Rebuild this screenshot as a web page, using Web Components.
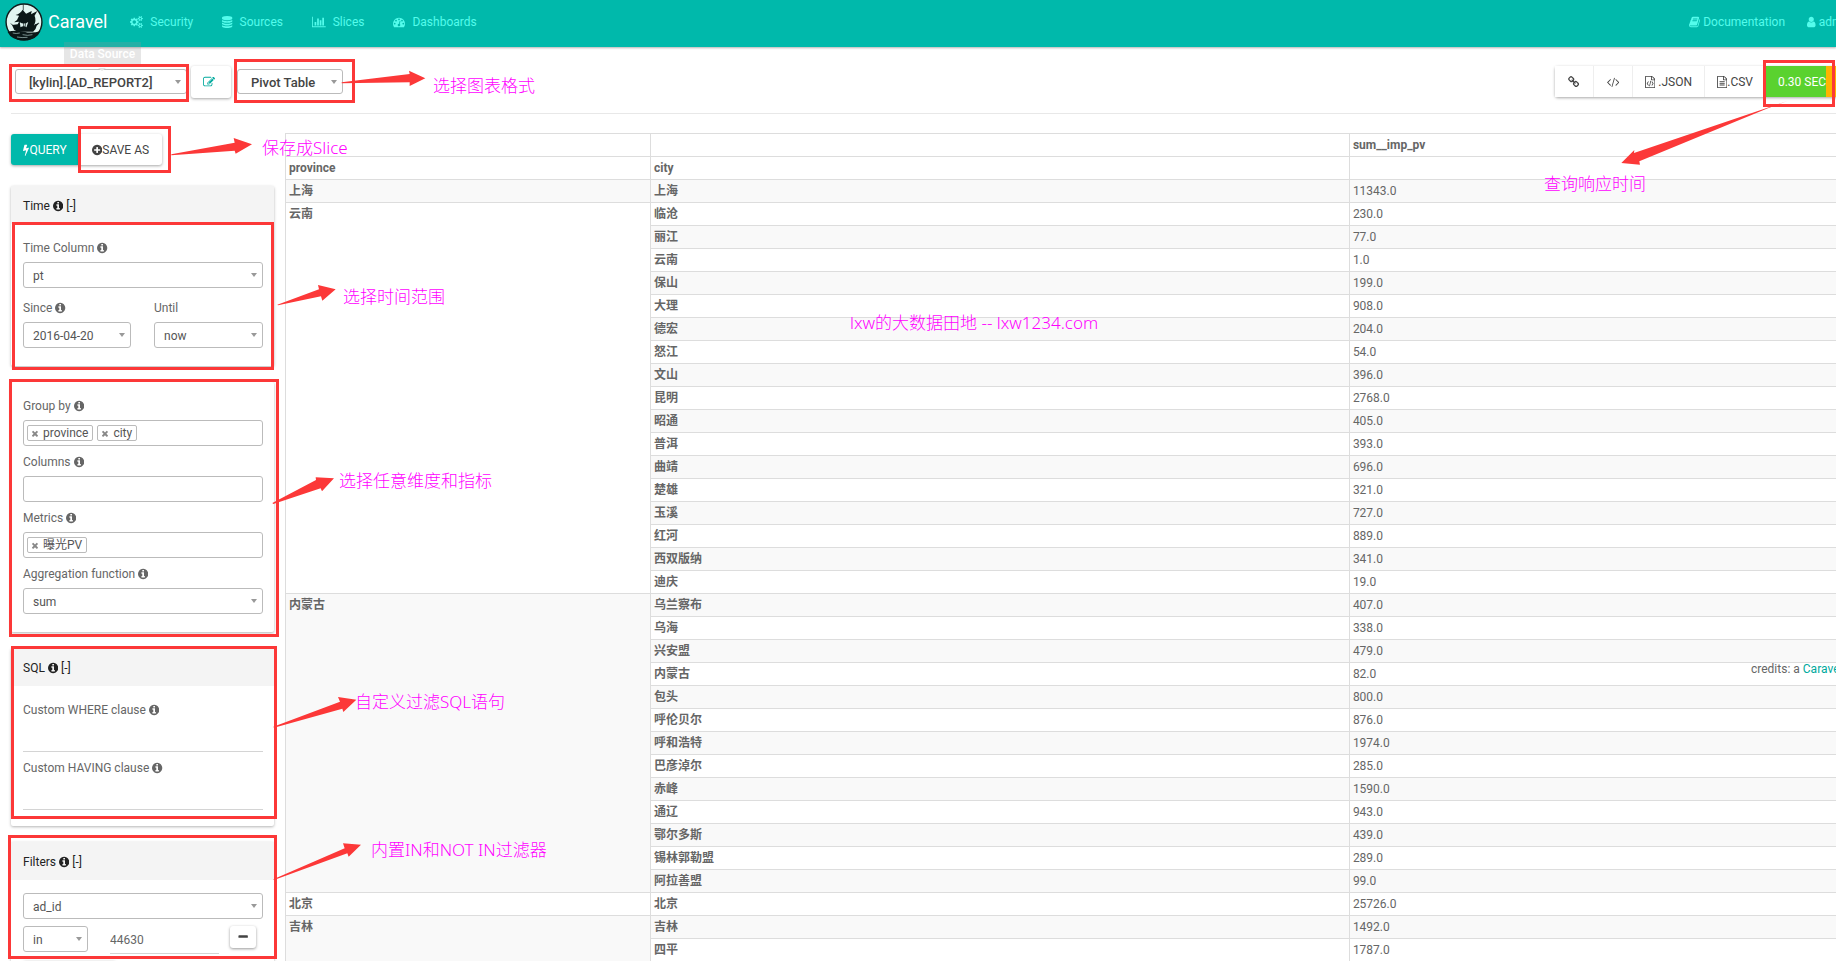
<!DOCTYPE html>
<html lang="en">
<head>
<meta charset="utf-8">
<title>Caravel</title>
<style>
  body {
    margin: 0;
    height: 100vh;
    overflow: hidden;
    font: 12px/18px Roboto, "Noto Sans CJK SC", sans-serif;
    color: #666;
    background: #fff;
  }
</style>
</head>
<body>
<caravel-app></caravel-app>

<script>
const define = (name, render) => customElements.define(name, class extends HTMLElement {
  connectedCallback() {
    if (this.shadowRoot) return;
    this.attachShadow({ mode: "open" }).innerHTML = render(this);
  }
});
const attr = (el, name) => el.getAttribute(name) || "";

/* ---------- icons: [x origin, width, drawing] on a 1792-unit tall grid ---------- */
const DISC = "M1664 896q0 209-103 385.5t-279.5 279.5-385.5 103-385.5-103-279.5-279.5-103-385.5 103-385.5 279.5-279.5 385.5-103 385.5 103 279.5 279.5 103 385.5z";
const SHEET = "M1596 380q28 28 48 76t20 88v1152q0 40-28 68t-68 28h-1344q-40 0-68-28t-28-68v-1600q0-40 28-68t68-28h896q40 0 88 20t76 48zm-444-244v376h376q-10-29-22-41l-313-313q-12-12-41-22zm384 1528v-1024h-416q-40 0-68-28t-28-68v-416h-768v1536h1280z";
const ICONS = {
  info: [128, 1536, "M1152 1376v-160q0-14-9-23t-23-9h-96v-512q0-14-9-23t-23-9h-320q-14 0-23 9t-9 23v160q0 14 9 23t23 9h96v320h-96q-14 0-23 9t-9 23v160q0 14 9 23t23 9h448q14 0 23-9t9-23zm-128-896v-160q0-14-9-23t-23-9h-192q-14 0-23 9t-9 23v160q0 14 9 23t23 9h192q14 0 23-9t9-23z" + DISC],
  plus: [128, 1536, "M1344 960v-128q0-26-19-45t-45-19h-256v-256q0-26-19-45t-45-19h-128q-26 0-45 19t-19 45v256h-256q-26 0-45 19t-19 45v128q0 26 19 45t45 19h256v256q0 26 19 45t45 19h128q26 0 45-19t19-45v-256h256q26 0 45-19t19-45z" + DISC],
  bolt: [440, 900, "M1333 566q18 20 7 44l-540 1157q-13 25-42 25-4 0-14-2-17-5-25.5-19t-4.5-30l197-808-406 101q-4 1-12 1-18 0-31-11-18-15-13-39l201-825q4-14 16-23t28-9h328q19 0 32 12.5t13 29.5q0 8-5 18l-171 463 396-98q8-2 12-2 19 0 34 15z"],
  database: [128, 1536, "M896 768q237 0 443-43t325-127v170q0 69-103 128t-280 93.5-385 34.5-385-34.5-280-93.5-103-128v-170q119 84 325 127t443 43zm0 768q237 0 443-43t325-127v170q0 69-103 128t-280 93.5-385 34.5-385-34.5-280-93.5-103-128v-170q119 84 325 127t443 43zm0-384q237 0 443-43t325-127v170q0 69-103 128t-280 93.5-385 34.5-385-34.5-280-93.5-103-128v-170q119 84 325 127t443 43zm0-1152q208 0 385 34.5t280 93.5 103 128v128q0 69-103 128t-280 93.5-385 34.5-385-34.5-280-93.5-103-128v-128q0-69 103-128t280-93.5 385-34.5z"],
  chart: [0, 2048, "M640 896v512h-256v-512h256zm384-512v1024h-256v-1024h256zm1024 1152v128h-2048v-1536h128v1408h1920zm-640-896v768h-256v-768h256zm384-384v1152h-256v-1152h256z"],
  gauge: [0, 1792, "M384 1152q0-53-37.5-90.5t-90.5-37.5-90.5 37.5-37.5 90.5 37.5 90.5 90.5 37.5 90.5-37.5 37.5-90.5zm192-448q0-53-37.5-90.5t-90.5-37.5-90.5 37.5-37.5 90.5 37.5 90.5 90.5 37.5 90.5-37.5 37.5-90.5zm428 481l101-382q6-26-7.5-48.5t-38.5-29.5-48 6.5-30 39.5l-101 382q-60 5-107 43.5t-63 98.5q-20 77 20 146t117 89 146-20 89-117q16-60-6-117t-72-91zm660-33q0-53-37.5-90.5t-90.5-37.5-90.5 37.5-37.5 90.5 37.5 90.5 90.5 37.5 90.5-37.5 37.5-90.5zm-640-640q0-53-37.5-90.5t-90.5-37.5-90.5 37.5-37.5 90.5 37.5 90.5 90.5 37.5 90.5-37.5 37.5-90.5zm448 192q0-53-37.5-90.5t-90.5-37.5-90.5 37.5-37.5 90.5 37.5 90.5 90.5 37.5 90.5-37.5 37.5-90.5zm320 448q0 261-141 483-19 29-54 29h-1402q-35 0-54-29-141-221-141-483 0-182 71-348t191-286 286-191 348-71 348 71 286 191 191 286 71 348z"],
  user: [256, 1280, "M1536 1399q0 109-62.5 187t-150.5 78h-854q-88 0-150.5-78t-62.5-187q0-85 8.5-160.5t31.5-152 58.5-131 94-89 134.5-34.5q131 128 313 128t313-128q76 0 134.5 34.5t94 89 58.5 131 31.5 152 8.5 160.5zm-256-887q0 159-112.5 271.5t-271.5 112.5-271.5-112.5-112.5-271.5 112.5-271.5 271.5-112.5 271.5 112.5 112.5 271.5z"],
  book: [60, 1670, "M1703 478q40 57 18 129l-275 906q-19 64-76.5 107.5t-122.5 43.5h-923q-77 0-148.5-53.5t-99.5-131.5q-24-67-2-127 0-4 3-27t4-37q1-8-3-21.5t-3-19.5q2-11 8-21t16.5-23.5 16.5-23.5q23-38 45-91.5t30-91.5q3-10 .5-30t-.5-28q3-11 17-28t17-23q21-36 42-92t25-90q1-9-2.5-32t.5-28q4-13 22-30.5t22-22.5q19-26 42.5-84.5t27.5-96.5q1-8-3-25.5t-2-26.5q2-8 9-18t18-23 17-21q8-12 16.5-30.5t15-35 16-36 19.5-32 26.5-23.5 36-11.5 47.5 5.5l-1 3q38-9 51-9h761q74 0 114 56t18 130l-274 906q-36 119-71.5 153.5t-128.5 34.5h-869q-27 0-38 15-11 16-1 43 24 70 144 70h923q29 0 56-15.5t35-41.5l300-987q7-22 5-57 38 15 59 43zm-1064 2q-4 13 2 22.5t20 9.5h608q13 0 25.5-9.5t16.5-22.5l21-64q4-13-2-22.5t-20-9.5h-608q-13 0-25.5 9.5t-16.5 22.5zm-83 256q-4 13 2 22.5t20 9.5h608q13 0 25.5-9.5t16.5-22.5l21-64q4-13-2-22.5t-20-9.5h-608q-13 0-25.5 9.5t-16.5 22.5z"],
  edit: [0, 1792, "M888 1184l116-116-152-152-116 116v56h96v96h56zm440-720q-16-16-33 1l-350 350q-17 17-1 33t33-1l350-350q17-17 1-33zm80 594v190q0 119-84.5 203.5t-203.5 84.5h-832q-119 0-203.5-84.5t-84.5-203.5v-832q0-119 84.5-203.5t203.5-84.5h832q63 0 117 25 15 7 18 23 3 17-9 29l-49 49q-14 14-32 8-23-6-45-6h-832q-66 0-113 47t-47 113v832q0 66 47 113t113 47h832q66 0 113-47t47-113v-126q0-13 9-22l64-64q15-15 35-7t20 29zm-96-738l288 288-672 672h-288v-288zm444 132l-92 92-288-288 92-92q28-28 68-28t68 28l152 152q28 28 28 68t-28 68z"],
  code: [100, 1848, "M681 1399l-50 50q-10 10-23 10t-23-10l-466-466q-10-10-10-23t10-23l466-466q10-10 23-10t23 10l50 50q10 10 10 23t-10 23l-393 393 393 393q10 10 10 23t-10 23zm591-1067l-373 1291q-4 13-15.5 19.5t-23.5 2.5l-62-17q-13-4-19.5-15.5t-2.5-24.5l373-1291q4-13 15.5-19.5t23.5-2.5l62 17q13 4 19.5 15.5t2.5 24.5zm657 651l-466 466q-10 10-23 10t-23-10l-50-50q-10-10-10-23t10-23l393-393-393-393q-10-10-10-23t10-23l50-50q10-10 23-10t23 10l466 466q10 10 10 23t-10 23z"],
  link: [60, 1664, "M1520 1216q0-40-28-68l-208-208q-28-28-68-28-42 0-72 32 3 3 19 18.5t21.5 21.5 15 19 13 25.5 3.5 27.5q0 40-28 68t-68 28q-15 0-27.5-3.5t-25.5-13-19-15-21.5-21.5-18.5-19q-33 31-33 73 0 40 28 68l206 207q27 27 68 27 40 0 68-26l147-146q28-28 28-67zm-703-705q0-40-28-68l-206-207q-28-28-68-28-39 0-68 27l-147 146q-28 28-28 67 0 40 28 68l208 208q27 27 68 27 42 0 72-31-3-3-19-18.5t-21.5-21.5-15-19-13-25.5-3.5-27.5q0-40 28-68t68-28q15 0 27.5 3.5t25.5 13 19 15 21.5 21.5 18.5 19q33-31 33-73zm895 705q0 120-85 203l-147 146q-83 83-203 83-121 0-204-85l-206-207q-83-83-83-203 0-123 88-209l-88-88q-86 88-208 88-120 0-204-84l-208-208q-84-84-84-204t85-203l147-146q83-83 203-83 121 0 204 85l206 207q83 83 83 203 0 123-88 209l88 88q86-88 208-88 120 0 204 84l208 208q84 84 84 204z"],
  filetext: [128, 1536, SHEET + "M512 800q0-14 9-23t23-9h704q14 0 23 9t9 23v64q0 14-9 23t-23 9h-704q-14 0-23-9t-9-23v-64zm736 224q14 0 23 9t9 23v64q0 14-9 23t-23 9h-704q-14 0-23-9t-9-23v-64q0-14 9-23t23-9h704zm0 256q14 0 23 9t9 23v64q0 14-9 23t-23 9h-704q-14 0-23-9t-9-23v-64q0-14 9-23t23-9h704z"],
  filecode: [128, 1536, SHEET + "M608 800l90 70-180 260 180 260-90 70-230-330zM1184 800l-90 70 180 260-180 260 90 70 230-330zM930 720l110 20-180 800-110-20z"],
  minus: [128, 1536, "M1600 736v192q0 40-28 68t-68 28h-1216q-40 0-68-28t-28-68v-192q0-40 28-68t68-28h1216q40 0 68 28t28 68z"],
  times: [300, 1190, "M1490 1322q0 40-28 68l-136 136q-28 28-68 28t-68-28l-294-294-294 294q-28 28-68 28t-68-28l-136-136q-28-28-28-68t28-68l294-294-294-294q-28-28-28-68t28-68l136-136q28-28 68-28t68 28l294 294 294-294q28-28 68-28t68 28l136 136q28 28 28 68t-28 68l-294 294 294 294q28 28 28 68z"],
  cogs: [0, 1920, "M896 896q0-106-75-181t-181-75-181 75-75 181 75 181 181 75 181-75 75-181zm768 512q0-52-38-90t-90-38-90 38-38 90q0 53 37.5 90.5t90.5 37.5 90.5-37.5 37.5-90.5zm0-1024q0-52-38-90t-90-38-90 38-38 90q0 53 37.5 90.5t90.5 37.5 90.5-37.5 37.5-90.5zm-384 421v185q0 10-7 19.5t-16 10.5l-155 24q-11 35-32 76 34 48 90 115 7 11 7 20 0 12-7 19-23 30-82.5 89.5t-78.5 59.5q-11 0-21-7l-115-90q-37 19-77 31-11 108-23 155-7 24-30 24h-186q-11 0-20-7.5t-10-17.5l-23-153q-34-10-75-31l-118 89q-7 7-20 7-11 0-21-8-144-133-144-160 0-9 7-19 10-14 41-53t47-61q-23-44-35-82l-152-24q-10-1-17-9.5t-7-19.5v-185q0-10 7-19.5t16-10.5l155-24q11-35 32-76-34-48-90-115-7-11-7-20 0-12 7-20 22-30 82-89t79-59q11 0 21 7l115 90q34-18 77-32 11-108 23-154 7-24 30-24h186q11 0 20 7.5t10 17.5l23 153q34 10 75 31l118-89q8-7 20-7 11 0 21 8 144 133 144 160 0 8-7 19-12 16-42 54t-45 60q23 48 34 82l152 23q10 2 17 10.5t7 19.5zm640 533v140q0 16-149 31-12 27-30 52 51 113 51 138 0 4-4 7-122 71-124 71-8 0-46-47t-52-68q-20 2-30 2t-30-2q-14 21-52 68t-46 47q-2 0-124-71-4-3-4-7 0-25 51-138-18-25-30-52-149-15-149-31v-140q0-16 149-31 13-29 30-52-51-113-51-138 0-4 4-7 4-2 35-20t59-34 30-16q8 0 46 46.5t52 67.5q20-2 30-2t30 2q51-71 92-112l6-2q4 0 124 70 4 3 4 7 0 25-51 138 17 23 30 52 149 15 149 31zm0-1024v140q0 16-149 31-12 27-30 52 51 113 51 138 0 4-4 7-122 71-124 71-8 0-46-47t-52-68q-20 2-30 2t-30-2q-14 21-52 68t-46 47q-2 0-124-71-4-3-4-7 0-25 51-138-18-25-30-52-149-15-149-31v-140q0-16 149-31 13-29 30-52-51-113-51-138 0-4 4-7 4-2 35-20t59-34 30-16q8 0 46 46.5t52 67.5q20-2 30-2t30 2q51-71 92-112l6-2q4 0 124 70 4 3 4 7 0 25-51 138 17 23 30 52 149 15 149 31z"]
};
define("app-icon", el => {
  const [x, w, d] = ICONS[attr(el, "name")];
  return `<style>
    :host { display: inline-flex; vertical-align: -2px; }
    svg { height: var(--icon, 12px); fill: currentColor; fill-rule: evenodd; }
  </style><svg viewBox="${x} 0 ${w} 1792" aria-hidden="true"><path d="${d}"/></svg>`;
});

/* ---------- navigation ---------- */
define("nav-link", el => `<style>
    :host { display: block; }
    a { display: flex; align-items: center; gap: var(--nav-gap, 7px); color: #54fcec; text-decoration: none; }
  </style><a href="#"><app-icon name="${attr(el, "icon")}"></app-icon><slot></slot></a>`);

define("brand-logo", () => `<style>
    :host { display: block; }
    a { display: flex; align-items: center; gap: 5px; color: #fff; text-decoration: none; font-size: 18px; line-height: 24px; }
    svg { width: 38px; height: 38px; }
  </style><a href="#"><svg viewBox="0 0 108 114" preserveAspectRatio="none" aria-hidden="true">
    <ellipse cx="54" cy="57" rx="51" ry="54" fill="#e2f6f1" stroke="#101c1c" stroke-width="4"/>
    <path d="M7 86Q30 80 54 86T101 84Q90 112 54 112T7 86z" fill="#0b1717"/>
    <path d="M22 90q10 3 20 0M50 95q14 4 28 0M34 102q14 3 30 1" stroke="#a9c4c0" stroke-width="2" fill="none"/>
    <path d="M52 4v18" stroke="#0b1717" stroke-width="2"/>
    <path d="M50 20q-6 12-20 16l10 2q-4 14-14 20l14-2-4 8-16 2 6 14q6 6 16 6h38q8-6 10-18l8-8-12 4-4 4q8-16 2-30l8-14-18 10 2-10-16 8z" fill="#0b1717"/>
    <path d="M42 58q12 8 24-1l-5 16q-8-6-17 0z" fill="#dcefeb"/><path d="M53 59v15M59 58l-2 14" stroke="#0b1717" stroke-width="2"/>
    <path d="M16 62l14 10M84 68l12-8" stroke="#0b1717" stroke-width="2"/>
  </svg><span>Caravel</span></a>`);

define("nav-bar", () => `<style>
    :host { display: block; background: #00b9ab; box-shadow: 0 1px 2px rgba(0,0,0,.3); }
    nav { display: flex; align-items: center; height: 47px; padding: 0 0 3px 5px; box-sizing: border-box; }
    .links { display: flex; gap: 29px; margin-left: 23px; }
    .right { --nav-gap: 3px; display: flex; gap: 22px; margin: 0 -16px 0 auto; white-space: nowrap; }
  </style><nav><brand-logo></brand-logo>
    <div class="links"><nav-link icon="cogs">Security</nav-link><nav-link icon="database">Sources</nav-link><nav-link icon="chart">Slices</nav-link><nav-link icon="gauge">Dashboards</nav-link></div>
    <div class="right"><nav-link icon="book">Documentation</nav-link><nav-link icon="user">admin</nav-link></div>
  </nav>`);

/* ---------- form fields ---------- */
const FIELD = `
    :host { display: block; min-width: 0; }
    label { display: block; margin-bottom: 5px; height: 18px; white-space: nowrap; }
`;
const labelFor = el => attr(el, "label")
  ? `<label for="f">${attr(el, "label")}${el.hasAttribute("info") ? ' <app-icon name="info"></app-icon>' : ""}</label>` : "";

define("select-field", el => `<style>${FIELD}
    .box { position: relative; }
    .box::after { content: ""; position: absolute; right: 6px; top: 11px; border: solid transparent; border-width: 4px 3px 0; border-top-color: #999; }
    select { appearance: none; display: block; width: 100%; height: 26px; margin: 0; padding: 1px 9px 0; border: 1px solid #bbb; border-radius: 3px; background: #fff; font: inherit; color: #555; }
    :host([strong]) select { height: 25px; padding: 2px 13px 0; font-size: 13px; font-weight: 500; color: #444; }
  </style>${labelFor(el)}<div class="box"><select id="f" aria-label="${attr(el, "label") || attr(el, "name")}"><option>${attr(el, "value")}</option></select></div>`);

define("tags-field", el => `<style>${FIELD}
    .box { display: flex; align-items: center; gap: 4px; height: 26px; box-sizing: border-box; padding: 0 3px; border: 1px solid #bbb; border-radius: 3px; }
    input { flex: 1; min-width: 0; border: 0; padding: 0; outline: 0; font: inherit; background: none; }
  </style>${labelFor(el)}<div class="box"><slot></slot><input id="f"></div>`);

define("tag-chip", () => `<style>
    :host { display: flex; align-items: center; height: 16px; box-sizing: border-box; padding: 0 4px; gap: 5px; border: 1px solid #bbb; border-radius: 2px; color: #555; line-height: 14px; }
    button { display: flex; border: 0; padding: 0; background: none; color: #888; --icon: 9px; }
  </style><button aria-label="Remove"><app-icon name="times"></app-icon></button><slot></slot>`);

define("text-field", el => `<style>${FIELD}
    input { display: block; width: 100%; height: 28px; box-sizing: border-box; border: 0; border-bottom: 1px solid #d4d4d4; padding: 0; font: inherit; color: #666; outline: 0; background: none; }
  </style>${labelFor(el)}<input id="f" aria-label="${attr(el, "label") || attr(el, "name")}" value="${attr(el, "value")}">`);

define("control-panel", el => `<style>
    :host { display: block; border-radius: 2px; background: #fff; box-shadow: 0 1px 3px rgba(0,0,0,.3); }
    header { height: 38px; box-sizing: border-box; padding: 11px 12px 0; background: #f4f4f4; color: #222; }
    .body { display: grid; grid-template-columns: minmax(0, 1fr); gap: 7px; padding: var(--panel-top, 15px) 11px var(--panel-bottom, 18px) 12px; }
  </style>${attr(el, "heading") ? `<header>${attr(el, "heading")} <app-icon name="info"></app-icon> [-]</header>` : ""}
  <div class="body"><slot></slot></div>`);

/* ---------- buttons ---------- */
const BUTTON = `
    button { display: flex; align-items: center; justify-content: center; box-sizing: border-box; border: 0; background: #fff; color: #444; font: inherit; white-space: nowrap; }
`;
define("query-actions", () => `<style>${BUTTON}
    :host { display: flex; }
    button { height: 31px; padding: 0 13px; box-shadow: 0 1px 3px rgba(0,0,0,.35); border-radius: 0 3px 3px 0; }
    .go { width: 68px; background: #00b9ab; color: #fff; border-radius: 3px 0 0 3px; }
  </style><button class="go"><app-icon name="bolt"></app-icon>QUERY</button><button><app-icon name="plus"></app-icon>SAVE AS</button>`);

define("tool-bar", () => `<style>${BUTTON}
    :host { display: flex; align-items: center; height: 63px; padding-top: 3px; border-bottom: 1px solid #e8e8e8; }
    .source { width: 172px; margin-left: 4px; }
    .edit { width: 40px; height: 32px; margin: 0 6px 0 4px; padding: 0 4px 0 0; border-radius: 3px; color: #00a99d; box-shadow: 0 1px 3px rgba(0,0,0,.35); }
    .viz { width: 106px; }
    .group { display: flex; margin: 0 -14px 0 auto; box-shadow: 0 1px 3px rgba(0,0,0,.35); border-radius: 3px; background: #fff; }
    .group button { height: 31px; padding: 0 12px; border-right: 1px solid #eee; }
    .group .plain { padding: 0 13px; }
    .group .time { padding: 0 0 0 12px; width: 60px; background: #5ad22f; color: #fff; border: 0; }
    .group .more { padding: 0; width: 24px; background: #ffb400; border: 0; }
  </style>
  <select-field class="source" strong name="Data Source" value="[kylin].[AD_REPORT2]"></select-field>
  <button class="edit" aria-label="Edit"><app-icon name="edit"></app-icon></button>
  <select-field class="viz" strong name="Visualization" value="Pivot Table"></select-field>
  <div class="group">
    <button class="plain" aria-label="Link"><app-icon name="link"></app-icon></button>
    <button class="plain" aria-label="Embed"><app-icon name="code"></app-icon></button>
    <button><app-icon name="filecode"></app-icon>&nbsp;.JSON</button>
    <button><app-icon name="filetext"></app-icon>.CSV</button>
    <button class="time">0.30 SEC</button><button class="more" aria-label="Query"></button>
  </div>`);

/* ---------- sidebar ---------- */
define("control-sidebar", () => `<style>${BUTTON}
    :host { display: flex; flex-direction: column; gap: 16px; }
    query-actions { margin-bottom: 5px; }
    .pair { display: grid; grid-template-columns: 108px 109px; justify-content: space-between; padding-top: 4px; }
    .sql { --panel-bottom: 16px; }
    .filters { --panel-top: 13px; }
    .row { display: flex; align-items: flex-start; }
    .row select-field { width: 65px; }
    .row text-field { flex: 1; margin: 0 11px 0 22px; }
    .small { width: 26px; height: 22px; margin-right: 7px; padding: 0; border-radius: 3px; box-shadow: 0 1px 3px rgba(0,0,0,.4); }
    .add { width: 93px; height: 31px; border-radius: 3px; box-shadow: 0 1px 3px rgba(0,0,0,.4); }
  </style>
  <query-actions></query-actions>
  <control-panel heading="Time">
    <select-field label="Time Column" info value="pt"></select-field>
    <div class="pair"><select-field label="Since" info value="2016-04-20"></select-field><select-field label="Until" value="now"></select-field></div>
  </control-panel>
  <control-panel>
    <tags-field label="Group by" info><tag-chip>province</tag-chip><tag-chip>city</tag-chip></tags-field>
    <tags-field label="Columns" info></tags-field>
    <tags-field label="Metrics" info><tag-chip>曝光PV</tag-chip></tags-field>
    <select-field label="Aggregation function" info value="sum"></select-field>
  </control-panel>
  <control-panel class="sql" heading="SQL">
    <text-field label="Custom WHERE clause" info></text-field>
    <text-field label="Custom HAVING clause" info></text-field>
  </control-panel>
  <control-panel class="filters" heading="Filters">
    <select-field name="Filter column" value="ad_id"></select-field>
    <div class="row"><select-field name="Operator" value="in"></select-field><text-field name="Value" value="44630"></text-field><button class="small" aria-label="Remove filter"><app-icon name="minus"></app-icon></button></div>
    <button class="add" aria-label="Add filter"></button>
  </control-panel>`);

/* ---------- pivot table ---------- */
const DATA = [
  ["上海", "上海 11343.0"],
  ["云南", "临沧 230.0,丽江 77.0,云南 1.0,保山 199.0,大理 908.0,德宏 204.0,怒江 54.0,文山 396.0,昆明 2768.0,昭通 405.0,普洱 393.0,曲靖 696.0,楚雄 321.0,玉溪 727.0,红河 889.0,西双版纳 341.0,迪庆 19.0"],
  ["内蒙古", "乌兰察布 407.0,乌海 338.0,兴安盟 479.0,内蒙古 82.0,包头 800.0,呼伦贝尔 876.0,呼和浩特 1974.0,巴彦淖尔 285.0,赤峰 1590.0,通辽 943.0,鄂尔多斯 439.0,锡林郭勒盟 289.0,阿拉善盟 99.0"],
  ["北京", "北京 25726.0"],
  ["吉林", "吉林 1492.0,四平 1787.0"]
];
define("pivot-table", () => {
  const rows = DATA.map(([province, list]) => {
    const cities = list.split(",").map(s => s.split(" "));
    return cities.map(([city, value], i) =>
      `<tr>${i ? "" : `<th scope="rowgroup" rowspan="${cities.length}">${province}</th>`}<th scope="row">${city}</th><td>${value}</td></tr>`).join("");
  }).join("");
  return `<style>
    :host { display: block; }
    table { width: 100%; table-layout: fixed; border-collapse: collapse; }
    .p { width: 365px; } .c { width: 44.8%; }
    th, td { height: 22px; padding: 0 3px; line-height: 22px; border: 1px solid #ddd; text-align: left; vertical-align: top; }
    th { font-weight: 700; }
    tbody tr:nth-child(odd) { background: #f9f9f9; }
  </style><table><colgroup><col class="p"><col class="c"><col></colgroup>
    <thead><tr><th></th><th></th><th>sum__imp_pv</th></tr><tr><th>province</th><th>city</th><th></th></tr></thead>
    <tbody>${rows}</tbody></table>`;
});

/* ---------- annotations drawn over the page ---------- */
define("note-layer", () => `<style>
    :host { position: absolute; inset: 0; pointer-events: none; color: #f0f; font: 17px/24px "Noto Sans", "Noto Sans CJK SC", sans-serif; }
    svg { position: absolute; left: 0; top: 0; overflow: visible; }
    ::slotted(span) { position: absolute; left: var(--x); top: var(--y); white-space: nowrap; font-weight: 300; }
  </style>
  <svg width="1" height="1" aria-hidden="true">
    <g fill="none" stroke="#fc3838" stroke-width="3" shape-rendering="crispEdges">
      <path d="M10.500 65.500h177v35h-177zM235.500 60.500h118v41h-118zM79.500 127.500h90v44h-90zM1764.500 61.500h69v44h-69zM13.500 223.500h259v145h-259zM10.500 380.500h267v255h-267zM12.500 647.500h263v170h-263zM9.500 836.500h266v121h-266z"/>
    </g>
    <g fill="#fc3838" transform="scale(.33333)">
      <path d="M1025 247L1229 222 1227 212 1276 235 1229 258 1229 247 1025 250z"/>
      <path d="M514 463L704 428 701 414 756 433 707 461 704 452 514 466z"/>
      <path d="M5362 303L4902 459 4903 450 4864 489 4920 494 4918 484 5300 326z"/>
      <path d="M832 914L957 868 954 855 1007 868 967 902 963 889 834 916z"/>
      <path d="M817 1509L948 1440 947 1432 1002 1435 966 1474 962 1465 820 1512z"/>
      <path d="M820 2180L1020 2105 1014 2091 1069 2099 1030 2136 1027 2126 822 2183z"/>
      <path d="M820 2638L1034 2545 1029 2530 1083 2534 1046 2570 1042 2560 822 2640z"/>
    </g>
  </svg><slot></slot>`);

/* ---------- page ---------- */
define("hover-tip", () => `<style>
    :host { position: absolute; left: 64px; top: 42px; width: 77px; height: 22px; background: rgba(150,150,150,.24); color: #fff; font-weight: 500; line-height: 24px; text-align: center; }
    :host::after { content: ""; position: absolute; left: 34px; top: 26px; border: solid transparent; border-width: 3px 4px 0; border-top-color: #e4e4e4; }
  </style><slot></slot>`);

define("caravel-app", () => `<style>
    :host { display: block; position: relative; height: 100%; overflow: hidden; }
    main { padding-left: 11px; }
    .content { display: grid; grid-template-columns: 263px minmax(0, 1fr); gap: 11px; padding-top: 20px; margin-right: -10px; align-items: start; }
    pivot-table { margin-top: -1px; }
    .credits { position: absolute; left: 1751px; top: 660px; white-space: nowrap; }
    .credits a { color: #00a99d; text-decoration: none; }
  </style>
  <nav-bar></nav-bar>
  <main>
    <tool-bar></tool-bar>
    <div class="content"><control-sidebar></control-sidebar><pivot-table></pivot-table></div>
  </main>
  <div class="credits">credits: a <a href="#">Caravel</a></div>
  <hover-tip>Data Source</hover-tip>
  <note-layer>
    <span style="--x:433px;--y:74px">选择图表格式</span>
    <span style="--x:262px;--y:136px">保存成Slice</span>
    <span style="--x:1544px;--y:172px">查询响应时间</span>
    <span style="--x:343px;--y:285px">选择时间范围</span>
    <span style="--x:850px;--y:311px">lxw的大数据田地 -- lxw1234.com</span>
    <span style="--x:339px;--y:469px">选择任意维度和指标</span>
    <span style="--x:355px;--y:690px">自定义过滤SQL语句</span>
    <span style="--x:371px;--y:838px">内置IN和NOT IN过滤器</span>
  </note-layer>`);
</script>
</body>
</html>
